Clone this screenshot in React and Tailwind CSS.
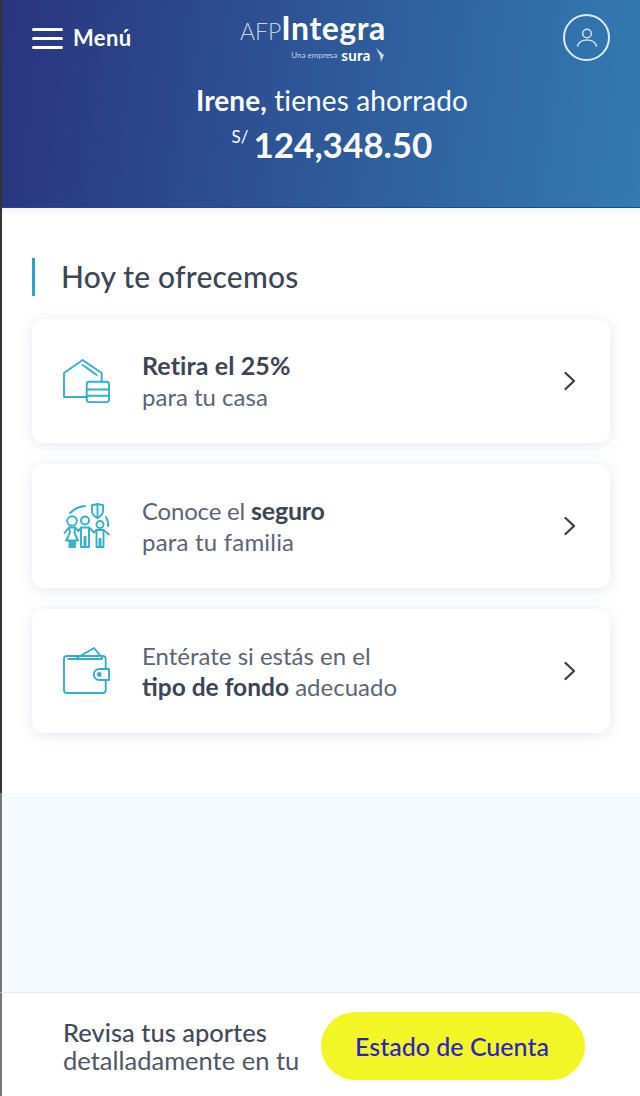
const font = { fontFamily: '"Lato", "Liberation Sans", sans-serif' };

function Chevron() {
  return (
    <svg width="14" height="22" viewBox="0 0 14 22" fill="none" stroke="#3a4354" strokeWidth="2.4" strokeLinecap="round" strokeLinejoin="round">
      <path d="M2.5 3 L11 11 L2.5 19" />
    </svg>
  );
}

function HouseIcon() {
  return (
    <svg width="47" height="44" viewBox="0 0 47 44" fill="none" stroke="#35aecb" strokeWidth="1.9" strokeLinejoin="round" strokeLinecap="round">
      <path d="M24 38 H1 V14 L19.7 1 L38.7 14 V23" />
      <path d="M19.7 6 L33.7 16" />
      <rect x="23.7" y="22.7" width="22.3" height="20.4" rx="2.5" />
      <path d="M23.7 30.5 H46 M23.7 36.7 H46" />
    </svg>
  );
}

function FamilyIcon() {
  return (
    <svg width="48" height="46" viewBox="0 0 48 46" fill="none" stroke="#35aecb" strokeWidth="1.9" strokeLinejoin="round" strokeLinecap="round">
      <path d="M29 2 C31 2 33 1.5 34.5 1 C36 1.5 38 2 40 2 V8 C40 11.5 37.5 13.5 34.5 15 C31.5 13.5 29 11.5 29 8 Z" />
      <path d="M34.5 1 V15" />
      <path d="M7 10 C11 6 16 3.5 22 3" />
      <path d="M43 14 C44.7 17 45.5 20 45 23" />
      <circle cx="9" cy="18" r="4.8" />
      <circle cx="22" cy="17.5" r="4" />
      <circle cx="37" cy="21.5" r="3.5" />
      <path d="M1.5 30 L6 24.5 H12 L15.5 28 L18 24.5 H26 L31 29.5 L33.5 27 H40.5 L46 31.5" />
      <path d="M6 24.5 L7 30 L3 37.5 H15 L11.5 30 L12 24.5" />
      <path d="M6.5 37.5 V44 H8.5 V38 M10 38 V44 H12 V37.5" />
      <path d="M18 25 V44 H21.5 V34 H22.5 V44 H26 V25" />
      <path d="M33.5 27 V44 H36.5 V36 H37.5 V44 H40.5 V27" />
    </svg>
  );
}

function WalletIcon() {
  return (
    <svg width="47" height="48" viewBox="0 0 47 48" fill="none" stroke="#35aecb" strokeWidth="1.9" strokeLinejoin="round" strokeLinecap="round">
      <path d="M42.7 22 V12 Q42.7 9 39.7 9 H4 Q1 9 1 12 V43 Q1 46 4 46 H39.7 Q42.7 46 42.7 43 V33" />
      <path d="M5.3 12 H39" />
      <path d="M13.7 11 L31 1 L39.3 11" />
      <path d="M46 22 H36.3 A5.5 5.5 0 0 0 36.3 33 H46 Z" />
      <circle cx="36.3" cy="27.5" r="1.5" fill="#35aecb" />
    </svg>
  );
}

function UserIcon() {
  return (
    <svg width="24" height="24" viewBox="0 0 24 24" fill="none" stroke="#cfe6f2" strokeWidth="1.5" strokeLinecap="round">
      <circle cx="12" cy="7.5" r="4.3" />
      <path d="M2.5 20 C4 15.5 7.5 14 12 14 C16.5 14 20 15.5 21.5 20" />
    </svg>
  );
}

function Card({ icon, children }) {
  return (
    <div className="flex h-[124px] items-center rounded-xl bg-white pl-[31px] pr-[33px] shadow-[0_2px_14px_rgba(60,90,150,0.14)]">
      <div className="flex w-[51px] shrink-0 justify-start">{icon}</div>
      <div className="ml-[28px] flex-1 text-[24px] leading-[31px] text-[#5c6575]">{children}</div>
      <Chevron />
    </div>
  );
}

export default function App() {
  return (
    <div className="flex h-[1096px] w-[640px] flex-col overflow-hidden bg-white" style={font}>
      <header className="relative h-[208px] shrink-0 border-b border-[#1f4a93] border-l-2 border-l-[#333333] bg-[linear-gradient(97deg,#29347f,#337bb2)] pt-[14px] text-white">
        <div className="flex items-start justify-between pl-[30px] pr-[30px]">
          <div className="mt-[12px] flex items-center gap-[10px]">
            <div className="flex w-[31px] flex-col gap-[6px]">
              <span className="h-[3px] rounded-full bg-white" />
              <span className="h-[3px] rounded-full bg-white" />
              <span className="h-[3px] rounded-full bg-white" />
            </div>
            <span className="text-[22px] font-bold leading-[24px] tracking-[0.4px]">Menú</span>
          </div>
          <div className="absolute left-[238px] top-[11px] flex flex-col items-end">
            <div className="flex items-baseline leading-[34px]">
              <span className="text-[23px] font-light text-[#c6d5e6]">AFP</span>
              <span className="text-[32px] font-bold tracking-[0.5px]">Integra</span>
            </div>
            <div className="flex items-center gap-[4px] pr-[1px] text-[#c6d5e6]">
              <span className="text-[8px] leading-[12px]">Una empresa</span>
              <span className="text-[15px] font-bold leading-[14px] tracking-[0.3px] text-white">sura</span>
              <svg width="10" height="14" viewBox="0 0 10 14" fill="#c6d5e6"><path d="M1 0 L9 7 L6 14 L5 8 Z" /></svg>
            </div>
          </div>
          <div className="flex h-[47px] w-[47px] items-center justify-center rounded-full border-2 border-[#dcecf5]">
            <UserIcon />
          </div>
        </div>
        <div className="absolute inset-x-0 top-[82px] pl-[22px] text-center">
          <div className="text-[28px] leading-[36px] tracking-[0.1px]"><span className="font-bold">Irene,</span> tienes ahorrado</div>
          <div className="mt-[4px] flex items-start justify-center leading-[44px]">
            <span className="mr-[5px] text-[17px] leading-[30px]">S/</span>
            <span className="text-[35px] font-bold leading-[44px]">124,348.50</span>
          </div>
        </div>
      </header>

      <main className="h-[585px] shrink-0 border-l-2 border-[#333333] bg-white pl-[30px] pr-[30px] shadow-[inset_0_8px_8px_-6px_rgba(0,0,0,0.07)]">
        <div className="mt-[50px] flex h-[38px] items-center border-l-[3px] border-[#2ba4c6] pb-[2px] pl-[26px] text-[30px] font-medium tracking-[0.2px] text-[#3d4555]">
          Hoy te ofrecemos
        </div>
        <div className="mt-[23px] flex flex-col gap-[21px]">
          <Card icon={<HouseIcon />}>
            <div className="text-[25px] font-bold tracking-[0.1px] text-[#3d4555]">Retira el 25%</div>
            <div>para tu casa</div>
          </Card>
          <Card icon={<FamilyIcon />}>
            <div className="tracking-[-0.2px]">Conoce el <b className="text-[25px] text-[#3d4555]">seguro</b></div>
            <div className="tracking-[0.2px]">para tu familia</div>
          </Card>
          <Card icon={<WalletIcon />}>
            <div>Entérate si estás en el</div>
            <div><b className="text-[24.5px] text-[#3d4555]">tipo de fondo</b> adecuado</div>
          </Card>
        </div>
      </main>

      <div className="h-[199px] shrink-0 border-l-2 border-[#777777] bg-[#f5faff]" />

      <footer className="flex flex-1 items-center border-t border-[#e2ebf7] border-l-2 border-l-[#777777] pl-[61px] pt-[2px]">
        <div className="w-[258px] text-[25.5px] leading-[28px] text-[#4f5767]">
          <div className="font-medium text-[#434b5b]">Revisa tus aportes</div>
          <div>detalladamente en tu</div>
        </div>
        <div className="flex h-[68px] w-[264px] items-center justify-center rounded-full bg-[#f3f626] pr-[2px] pt-[3px] text-[25px] font-medium text-[#2c22c0]">
          Estado de Cuenta
        </div>
      </footer>
    </div>
  );
}
